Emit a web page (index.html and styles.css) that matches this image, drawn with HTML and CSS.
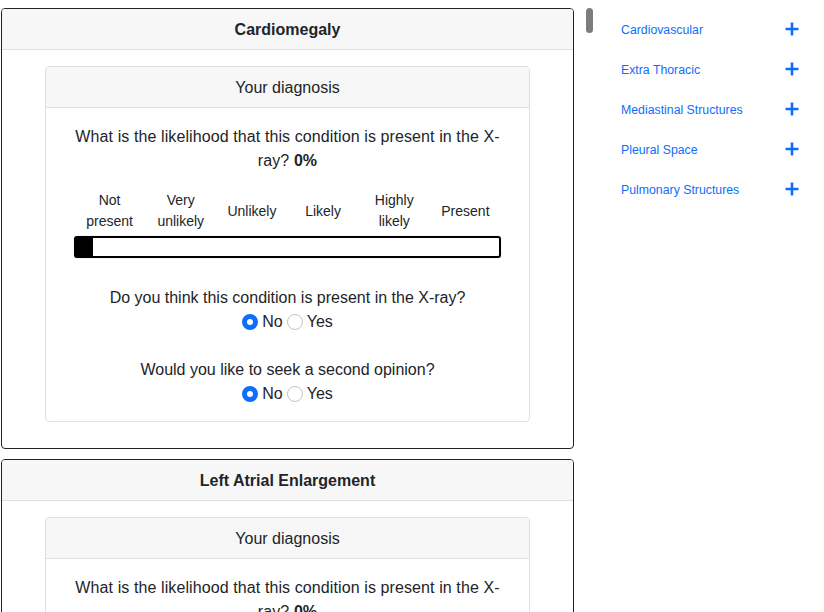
FILE: index.html
```html
<!DOCTYPE html>
<html lang="en">
<head>
<meta charset="utf-8">
<title>Diagnosis</title>
<link rel="stylesheet" href="styles.css">
</head>
<body>
<div class="page">
  <main class="conditions">
    <section class="card">
      <header class="card-header title">Cardiomegaly</header>
      <div class="card-body">
        <div class="inner-card">
          <header class="inner-header">Your diagnosis</header>
          <div class="inner-body">
            <p class="question">What is the likelihood that this condition is present in the X-ray? <b>0%</b></p>
            <div class="scale">
              <div class="labels">
                <span>Not present</span>
                <span>Very unlikely</span>
                <span>Unlikely</span>
                <span>Likely</span>
                <span>Highly likely</span>
                <span>Present</span>
              </div>
              <div class="slider"><span class="thumb"></span></div>
            </div>
            <p class="ask first">Do you think this condition is present in the X-ray?</p>
            <div class="radios">
              <span class="radio checked"></span><span class="rlabel">No</span>
              <span class="radio"></span><span class="rlabel">Yes</span>
            </div>
            <p class="ask">Would you like to seek a second opinion?</p>
            <div class="radios">
              <span class="radio checked"></span><span class="rlabel">No</span>
              <span class="radio"></span><span class="rlabel">Yes</span>
            </div>
          </div>
        </div>
      </div>
    </section>
    <section class="card">
      <header class="card-header title">Left Atrial Enlargement</header>
      <div class="card-body">
        <div class="inner-card">
          <header class="inner-header">Your diagnosis</header>
          <div class="inner-body">
            <p class="question">What is the likelihood that this condition is present in the X-ray? <b>0%</b></p>
          </div>
        </div>
      </div>
    </section>
  </main>
  <div class="scroll-thumb"></div>
  <aside class="sidebar">
    <div class="nav-row"><a href="#">Cardiovascular</a><svg class="plus" viewBox="0 0 14 14"><path d="M7 0.5V13.5M0.5 7H13.5"/></svg></div>
    <div class="nav-row"><a href="#">Extra Thoracic</a><svg class="plus" viewBox="0 0 14 14"><path d="M7 0.5V13.5M0.5 7H13.5"/></svg></div>
    <div class="nav-row"><a href="#">Mediastinal Structures</a><svg class="plus" viewBox="0 0 14 14"><path d="M7 0.5V13.5M0.5 7H13.5"/></svg></div>
    <div class="nav-row"><a href="#">Pleural Space</a><svg class="plus" viewBox="0 0 14 14"><path d="M7 0.5V13.5M0.5 7H13.5"/></svg></div>
    <div class="nav-row"><a href="#">Pulmonary Structures</a><svg class="plus" viewBox="0 0 14 14"><path d="M7 0.5V13.5M0.5 7H13.5"/></svg></div>
  </aside>
</div>
</body>
</html>
```

FILE: styles.css
```css
* { box-sizing: border-box; }
html, body {
  margin: 0;
  padding: 0;
  background: #fff;
  font-family: "Liberation Sans", Arial, sans-serif;
  color: #212529;
  font-size: 16px;
  line-height: 24px;
}
.page {
  display: flex;
  width: 824px;
  height: 612px;
  overflow: hidden;
  position: relative;
}
.conditions {
  width: 574px;
  flex: none;
  padding: 8px 0 0 1px;
}
.card {
  border: 1px solid #222;
  border-radius: 4px;
  margin-bottom: 10px;
  overflow: hidden;
}
.card-header {
  background: #f7f7f7;
  border-bottom: 1px solid #dfdfdf;
  padding: 9px 16px 7px;
  text-align: center;
  font-weight: bold;
}
.card-body {
  padding: 16px 0 26px;
}
.inner-card {
  width: 485px;
  margin: 0 auto;
  border: 1px solid #dfdfdf;
  border-radius: 4px;
  overflow: hidden;
}
.inner-header {
  background: #f7f7f7;
  border-bottom: 1px solid #dfdfdf;
  padding: 9px 16px 7px;
  text-align: center;
}
.inner-body {
  padding: 17px 16px 15px;
  text-align: center;
}
.question {
  margin: 0;
  padding: 0 8px;
  letter-spacing: 0.1px;
}
.scale {
  width: 427px;
  margin: 17px auto 0;
}
.labels {
  display: grid;
  grid-template-columns: repeat(6, 1fr);
  align-items: center;
  font-size: 14px;
  line-height: 21px;
  height: 42px;
}
.labels span { padding: 0 4px; }
.slider {
  margin-top: 4px;
  height: 22px;
  border: 2px solid #000;
  border-radius: 3px;
  box-shadow: 0 0 1px rgba(0,0,0,0.4);
  padding: 0;
  display: flex;
}
.thumb {
  width: 17px;
  background: #000;
}
.ask {
  margin: 0;
}
.ask.first { margin-top: 28px; }
.radios + .ask { margin-top: 24px; }
.radios {
  display: flex;
  justify-content: center;
  align-items: center;
  height: 24px;
}
.radio {
  width: 16px;
  height: 16px;
  border-radius: 50%;
  border: 1px solid #c4c4c4;
  background: #fff;
  margin-right: 4px;
}
.radio.checked {
  border: 5px solid #0d6efd;
}
.rlabel { margin-right: 4px; }
.rlabel:last-child { margin-right: 0; }
.scroll-thumb {
  position: absolute;
  left: 586px;
  top: 8px;
  width: 7px;
  height: 25px;
  border-radius: 4px;
  background: #7d7d7d;
}
.sidebar {
  flex: 1;
  padding: 10px 25px 0 47px;
}
.nav-row {
  display: flex;
  justify-content: space-between;
  align-items: center;
  height: 40px;
}
.nav-row a {
  color: #0d6efd;
  text-decoration: none;
  font-size: 12.3px;
  line-height: 18px;
}
.plus {
  width: 14px;
  height: 14px;
  stroke: #0d6efd;
  stroke-width: 2.6;
  fill: none;
  margin-top: -2px;
}
```
